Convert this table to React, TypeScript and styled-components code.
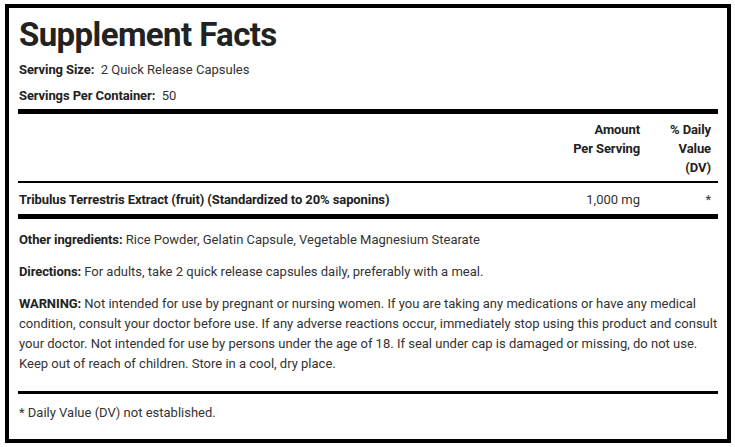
import styled, { createGlobalStyle } from "styled-components";

const GlobalStyle = createGlobalStyle`
  html, body {
    margin: 0;
    padding: 0;
    background: #fff;
  }
  body {
    font-family: Roboto, "Liberation Sans", Arial, sans-serif;
    color: #333;
  }
`;

const Page = styled.div`
  padding: 4px 4px 4px 5px;
`;

const Label = styled.div`
  box-sizing: border-box;
  width: 726px;
  height: 439px;
  border: 4px solid #000;
  padding: 7px 9px 0 9px;
  background: #fff;
`;

const Title = styled.h1`
  margin: 0;
  font-size: 33px;
  line-height: 40px;
  font-weight: 700;
  color: #222;
  letter-spacing: -0.6px;
  padding-left: 1px;
`;

const Line = styled.div<{ $top?: number }>`
  font-size: 13px;
  line-height: 20px;
  margin-top: ${(p) => p.$top ?? 0}px;
  padding-left: 1px;
`;

const Bold = styled.strong`
  font-weight: 700;
  color: #222;
  letter-spacing: -0.1px;
`;

const Rule = styled.hr<{ $size: number; $top?: number; $bottom?: number }>`
  border: none;
  background: #000;
  height: ${(p) => p.$size}px;
  margin: ${(p) => p.$top ?? 0}px 0 ${(p) => p.$bottom ?? 0}px 0;
`;

const Grid = styled.div`
  display: grid;
  grid-template-columns: 1fr 100px 71px;
  font-size: 13px;
  padding-right: 7px;
`;

const HeadCell = styled.div`
  font-weight: 700;
  color: #222;
  line-height: 19px;
  text-align: right;
  letter-spacing: -0.1px;
`;

const Cell = styled.div<{ $align?: string }>`
  line-height: 20px;
  text-align: ${(p) => p.$align ?? "right"};
  padding-left: ${(p) => (p.$align === "left" ? 1 : 0)}px;
`;

const Note = styled.p<{ $top?: number }>`
  margin: ${(p) => p.$top ?? 12}px 0 0 0;
  font-size: 13px;
  line-height: 20px;
  padding-left: 1px;
`;

export default function App() {
  return (
    <>
      <GlobalStyle />
      <Page>
        <Label>
          <Title>Supplement Facts</Title>
          <Line $top={5}>
            <Bold>Serving Size:</Bold>&nbsp; 2 Quick Release Capsules
          </Line>
          <Line $top={6}>
            <Bold>Servings Per Container:</Bold>&nbsp; 50
          </Line>
          <Rule $size={5} $top={3} $bottom={6} />
          <Grid>
            <div />
            <HeadCell>
              Amount
              <br />
              Per Serving
            </HeadCell>
            <HeadCell>
              % Daily
              <br />
              Value
              <br />
              (DV)
            </HeadCell>
          </Grid>
          <Rule $size={2} $top={4} $bottom={7} />
          <Grid>
            <Cell $align="left">
              <Bold>Tribulus Terrestris Extract (fruit) (Standardized to 20% saponins)</Bold>
            </Cell>
            <Cell>1,000 mg</Cell>
            <Cell>*</Cell>
          </Grid>
          <Rule $size={5} $top={4} $bottom={0} />
          <Note $top={11}>
            <Bold>Other ingredients:</Bold> Rice Powder, Gelatin Capsule, Vegetable Magnesium Stearate
          </Note>
          <Note>
            <Bold>Directions:</Bold> For adults, take 2 quick release capsules daily, preferably with a meal.
          </Note>
          <Note>
            <Bold>WARNING:</Bold> Not intended for use by pregnant or nursing women. If you are taking any
            medications or have any medical condition, consult your doctor before use. If any adverse
            reactions occur, immediately stop using this product and consult your doctor. Not intended for
            use by persons under the age of 18. If seal under cap is damaged or missing, do not use. Keep out
            of reach of children. Store in a cool, dry place.
          </Note>
          <Rule $size={3} $top={17} $bottom={0} />
          <Note $top={9}>* Daily Value (DV) not established.</Note>
        </Label>
      </Page>
    </>
  );
}
